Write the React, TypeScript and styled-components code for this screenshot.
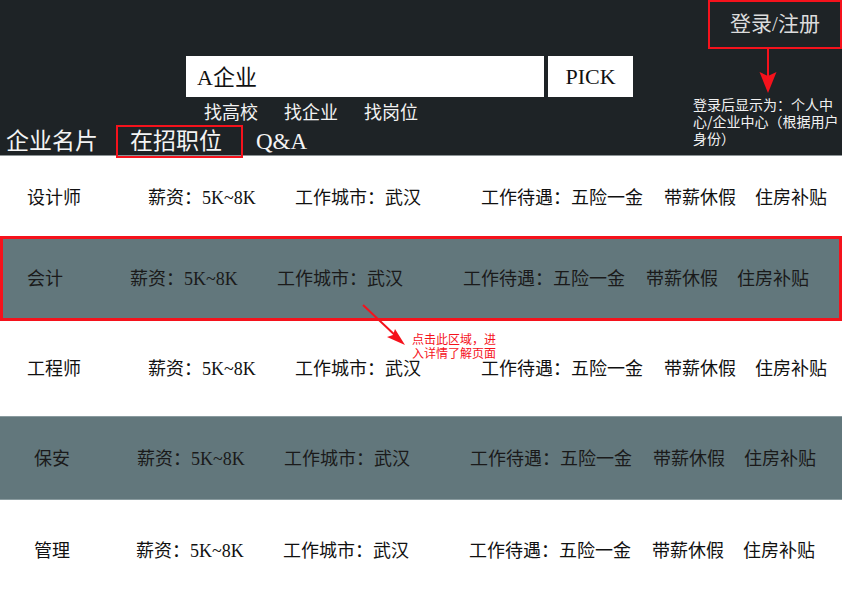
import React from "react";
import styled, { createGlobalStyle } from "styled-components";

const GlobalStyle = createGlobalStyle`
  html, body {
    margin: 0;
    padding: 0;
    background: #ffffff;
  }
  body {
    font-family: "Liberation Serif", "Noto Sans CJK SC", serif;
    overflow: hidden;
  }
  * { box-sizing: border-box; }
`;

const RED = "#f5121c";

const Page = styled.div`
  width: 842px;
  height: 600px;
  display: flex;
  flex-direction: column;
  font-family: "Liberation Serif", "Noto Sans CJK SC", serif;
`;

const Header = styled.header`
  height: 156px;
  flex: 0 0 156px;
  background: #1e2326;
  border-bottom: 1px solid #8d9496;
  display: flex;
  position: relative;
  z-index: 2;
`;

const LeftArea = styled.div`
  flex: 1;
  display: flex;
  flex-direction: column;
  padding-top: 56px;
  & > * {
    flex-shrink: 0;
  }
`;

const SearchRow = styled.div`
  display: flex;
  gap: 4px;
  margin-left: 186px;
  height: 41px;
`;

const SearchInput = styled.input`
  width: 358px;
  height: 41px;
  border: none;
  outline: none;
  background: #ffffff;
  padding: 0 11px 3px;
  font-family: "Liberation Serif", "Noto Sans CJK SC", serif;
  font-size: 22px;
  color: #111;
`;

const PickButton = styled.button`
  width: 85px;
  height: 41px;
  border: none;
  background: #ffffff;
  font-family: "Liberation Serif", serif;
  font-size: 22px;
  color: #111;
  padding: 0;
  cursor: pointer;
`;

const LinksRow = styled.nav`
  display: flex;
  align-items: center;
  gap: 26px;
  margin-left: 204px;
  height: 28px;
`;

const QuickLink = styled.a`
  color: #f2f2f2;
  font-family: "Noto Sans CJK SC", sans-serif;
  font-size: 18px;
  line-height: 1;
  text-decoration: none;
`;

const TabsRow = styled.div`
  display: flex;
  align-items: center;
  height: 33px;
  padding-left: 6px;
`;

const Tab = styled.div<{ $active?: boolean }>`
  height: 33px;
  display: flex;
  align-items: center;
  color: #f4f4f4;
  font-size: 23px;
  line-height: 1;
  ${(p) =>
    p.$active
      ? `
    width: 127px;
    border: 2px solid ${RED};
    padding-left: 12px;
    margin: 0 13px 0 18px;
  `
      : ``}
`;

const RightArea = styled.div`
  width: 150px;
  flex: 0 0 150px;
  display: flex;
  flex-direction: column;
  & > * {
    flex-shrink: 0;
  }
`;

const LoginBox = styled.div`
  margin-left: 16px;
  width: 134px;
  height: 49px;
  border: 2px solid ${RED};
  display: flex;
  align-items: center;
  justify-content: center;
  color: #dcdcdc;
  font-size: 21px;
  line-height: 1;
`;

const ArrowDown = styled.svg`
  display: block;
  width: 150px;
  height: 47px;
`;

const NoteText = styled.p`
  margin: 0;
  width: 150px;
  padding-left: 1px;
  color: #f2f2f2;
  font-family: "Noto Sans CJK SC", sans-serif;
  font-size: 14px;
  line-height: 17px;
`;

const List = styled.main`
  position: relative;
  flex: 1;
  display: flex;
  flex-direction: column;
`;

const Row = styled.div<{
  $dark?: boolean;
  $highlight?: boolean;
  $height: number;
  $indent: number;
  $nameCol: number;
  $lift: number;
}>`
  height: ${(p) => p.$height}px;
  flex: 0 0 ${(p) => p.$height}px;
  display: grid;
  grid-template-columns: ${(p) => p.$nameCol}px 147px 186px 183px 91px 1fr;
  align-items: center;
  padding-left: ${(p) => p.$indent}px;
  padding-top: ${(p) => Math.max(p.$lift, 0)}px;
  padding-bottom: ${(p) => Math.max(-p.$lift, 0)}px;
  background: ${(p) => (p.$dark ? "#62777c" : "transparent")};
  color: ${(p) => (p.$dark ? "#1a1a1a" : "#111111")};
  font-size: 18px;
  line-height: 1;
  cursor: pointer;
  ${(p) =>
    p.$highlight
      ? `border: 3px solid ${RED};`
      : p.$dark
      ? `border-top: 1px solid #8a9b9f; border-bottom: 1px solid #8a9b9f;`
      : ``}
`;

const Cell = styled.span`
  white-space: nowrap;
`;

const Annotation = styled.div`
  position: absolute;
  left: 360px;
  top: 146px;
  width: 150px;
  height: 60px;
  pointer-events: none;
`;

const AnnotationArrow = styled.svg`
  position: absolute;
  left: 0;
  top: 0;
  width: 50px;
  height: 48px;
`;

const AnnotationText = styled.p`
  position: absolute;
  left: 52px;
  top: 30px;
  margin: 0;
  width: 86px;
  color: ${RED};
  font-family: "Noto Sans CJK SC", sans-serif;
  font-size: 12px;
  line-height: 14px;
`;

type Job = {
  title: string;
  dark?: boolean;
  highlight?: boolean;
  height: number;
  indent: number;
  nameCol: number;
  lift: number;
};

const jobs: Job[] = [
  { title: "设计师", height: 80, indent: 27, nameCol: 121, lift: 4 },
  { title: "会计", dark: true, highlight: true, height: 85, indent: 24, nameCol: 103, lift: 0 },
  { title: "工程师", height: 95, indent: 27, nameCol: 121, lift: 0 },
  { title: "保安", dark: true, height: 84, indent: 34, nameCol: 103, lift: 2 },
  { title: "管理", height: 100, indent: 34, nameCol: 102, lift: 1 },
];

export default function App() {
  return (
    <>
      <GlobalStyle />
      <Page>
        <Header>
          <LeftArea>
            <SearchRow>
              <SearchInput defaultValue="A企业" />
              <PickButton>PICK</PickButton>
            </SearchRow>
            <LinksRow>
              <QuickLink>找高校</QuickLink>
              <QuickLink>找企业</QuickLink>
              <QuickLink>找岗位</QuickLink>
            </LinksRow>
            <TabsRow>
              <Tab>企业名片</Tab>
              <Tab $active>在招职位</Tab>
              <Tab>Q&amp;A</Tab>
            </TabsRow>
          </LeftArea>
          <RightArea>
            <LoginBox>登录/注册</LoginBox>
            <ArrowDown viewBox="0 0 150 47">
              <line x1="76" y1="0" x2="76" y2="28" stroke={RED} strokeWidth="2" />
              <polygon points="67.5,23 76,44 84.5,23 76,27" fill={RED} />
            </ArrowDown>
            <NoteText>登录后显示为：个人中心/企业中心（根据用户身份）</NoteText>
          </RightArea>
        </Header>
        <List>
          {jobs.map((j) => (
            <Row
              key={j.title}
              $dark={j.dark}
              $highlight={j.highlight}
              $height={j.height}
              $indent={j.indent}
              $nameCol={j.nameCol}
              $lift={j.lift}
            >
              <Cell>{j.title}</Cell>
              <Cell>薪资：5K~8K</Cell>
              <Cell>工作城市：武汉</Cell>
              <Cell>工作待遇：五险一金</Cell>
              <Cell>带薪休假</Cell>
              <Cell>住房补贴</Cell>
            </Row>
          ))}
          <Annotation>
            <AnnotationArrow viewBox="0 0 50 48">
              <line x1="3" y1="3" x2="38" y2="36" stroke={RED} strokeWidth="2" />
              <polygon points="45,43 27,35 33,33 35,27" fill={RED} />
            </AnnotationArrow>
            <AnnotationText>点击此区域，进入详情了解页面</AnnotationText>
          </Annotation>
        </List>
      </Page>
    </>
  );
}
